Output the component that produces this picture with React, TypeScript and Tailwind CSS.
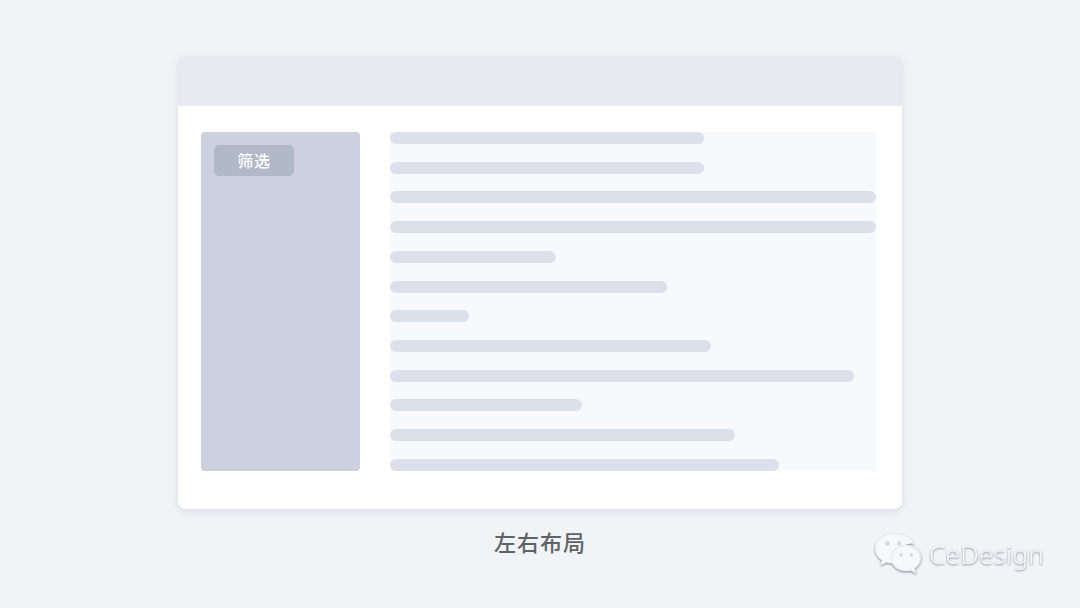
const rows = ["w-[314px]","w-[314px]","w-full","w-full","w-[166px]","w-[277px]","w-[79px]","w-[321px]","w-[464px]","w-[192px]","w-[345px]","w-[389px]"];

function Logo() {
  return (
    <div className="flex items-center gap-[7px] drop-shadow-[0_1px_1px_rgba(80,90,105,0.7)]">
      <svg width="48" height="42" viewBox="0 0 50 44" className="shrink-0">
        <path d="M20 1C9.5 1 1 8 1 16.6c0 5 2.8 9.2 7.2 12l-1.600 5.400 6.200-3.200c2.200.6 4.600 1 7.200 1 1 0 2-.1 3-.2-.6-1.700-.9-3.400-.9-5.200 0-8.600 8-15.400 18-15.400.8 0 1.400 0 2 .1C39.400 5 30.600 1 20 1Z" fill="#f7f8fa" />
        <path d="M48.500 26.200C48.500 18.900 41.500 13 33.300 13S18 18.900 18 26.200s7 13.200 15.300 13.200c1.800 0 3.500-.3 5.100-.7l4.800 2.800-1.300-4.600c3.900-2.500 6.600-6.300 6.600-10.700Z" fill="#f7f8fa" stroke="#e9edf1" strokeWidth="1.500" />
        <circle cx="14" cy="11" r="2.300" fill="#d5d9de" />
        <circle cx="26.500" cy="11" r="2.300" fill="#d5d9de" />
        <circle cx="28" cy="23" r="1.800" fill="#d5d9de" />
        <circle cx="39" cy="23" r="1.800" fill="#d5d9de" />
      </svg>
      <span className="text-[26px] leading-none font-light tracking-[0.3px] text-[#f8f9fb] font-['Noto_Sans','Open_Sans',sans-serif]">CeDesign</span>
    </div>
  );
}

export default function App() {
  return (
    <div className="relative h-[608px] w-[1080px] overflow-hidden bg-[#f1f4f7] pt-[56px] flex flex-col items-center font-['Noto_Sans_CJK_SC','Noto_Sans',sans-serif]">
      <div className="w-[724px] h-[453px] flex flex-col rounded-[8px] overflow-hidden bg-white shadow-[0_3px_10px_rgba(70,85,110,0.13)]">
        <div className="h-[50px] shrink-0 bg-[#e6e9f0]" />
        <div className="flex-1 flex gap-[30px] pl-[23px] pr-[26px] pt-[26px] pb-[38px]">
          <div className="w-[159px] shrink-0 rounded-[4px] bg-[#cdd1df] p-[13px]">
            <div className="w-[80px] h-[31px] rounded-[5px] bg-[#b1b8c8] flex items-center justify-center pb-[2px] text-[16px] leading-none font-medium tracking-[0.5px] text-white">筛选</div>
          </div>
          <div className="flex-1 flex flex-col justify-between bg-[#f7f9fd]">
            {rows.map((w, i) => (
              <div key={i} className={`${w} h-[12px] rounded-[6px] bg-[#dce0ea]`} />
            ))}
          </div>
        </div>
      </div>
      <div className="mt-[16px] text-[22px] leading-[32px] font-medium tracking-[1px] text-[#5f6368]">左右布局</div>
      <div className="absolute left-[874px] top-[533px]">
        <Logo />
      </div>
    </div>
  );
}
